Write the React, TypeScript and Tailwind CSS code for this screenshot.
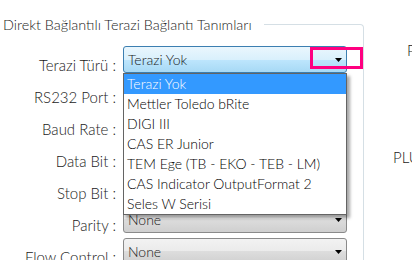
import React from "react";

const Arrow = () => (
  <svg width="7" height="4" viewBox="0 0 7 4" className="block">
    <polygon points="0,0 7,0 3.5,4" fill="#000" />
  </svg>
);

const Combo = ({ text, hot }: { text: string; hot?: boolean }) => (
  <div
    className={
      hot
        ? "relative ml-[7px] h-[27px] w-[224px] shrink-0 rounded-[3px] border border-[#3c7fb1] bg-[linear-gradient(#eaf6fd_0%,#d9f0fc_50%,#bee6fd_50%,#a7d9f5_100%)] flex items-center justify-between pl-[4px] pr-[4px]"
        : "relative ml-[7px] h-[27px] w-[224px] shrink-0 rounded-[3px] border border-[#8a8a8a] bg-[linear-gradient(#f2f2f2_0%,#ebebeb_50%,#dddddd_50%,#cfcfcf_100%)] flex items-center justify-between pl-[4px] pr-[4px]"
    }
  >
    <span className="leading-[20px] whitespace-nowrap">{text}</span>
    <Arrow />
  </div>
);

const rows = [
  "Terazi Türü :",
  "RS232 Port :",
  "Baud Rate :",
  "Data Bit :",
  "Stop Bit :",
  "Parity :",
  "Flow Control :",
];

const items = [
  "Terazi Yok",
  "Mettler Toledo bRite",
  "DIGI III",
  "CAS ER Junior",
  "TEM Ege (TB - EKO - TEB - LM)",
  "CAS Indicator OutputFormat 2",
  "Seles W Serisi",
];

export default function App() {
  return (
    <div className="relative flex h-[260px] w-[412px] overflow-hidden bg-white font-['Lato',sans-serif] text-[14px] font-light text-[#1a1a1a]">
      <div className="w-[364px] shrink-0 pt-[24px]">
        <div className="relative h-[300px] rounded-tr-[4px] border-t border-r border-[#d5dfe5]">
          <div className="absolute left-0 top-[-10px] bg-white pl-[3px] pr-[12px] text-[14.4px] leading-[20px] whitespace-nowrap">
            Direkt Bağlantılı Terazi Bağlantı Tanımları
          </div>
          <div className="flex flex-col gap-[5px] pt-[21px]">
            {rows.map((r, i) => (
              <div key={r} className="flex h-[27px] items-start">
                <div className="w-[116px] shrink-0 pt-[9px] text-right text-[15px] leading-[20px] whitespace-nowrap">
                  {r}
                </div>
                <Combo text={i === 0 ? "Terazi Yok" : i >= 5 ? "None" : ""} hot={i === 0} />
              </div>
            ))}
          </div>
        </div>
      </div>
      <div className="flex-1 whitespace-nowrap text-[15px]">
        <div className="pl-[43px] pt-[40px] leading-[20px]">P</div>
        <div className="mt-[87px] pl-[29px] leading-[20px]">PLU</div>
      </div>

      <div className="absolute left-[123px] top-[73px] w-[224px] border border-[#646464] bg-white shadow-[3px_3px_3px_rgba(0,0,0,0.35)]">
        {items.map((it, i) => (
          <div
            key={it}
            className={
              i === 0
                ? "h-[20px] bg-[#3399ff] pl-[3px] leading-[20px] text-white whitespace-nowrap"
                : "h-[20px] pl-[3px] leading-[20px] text-black whitespace-nowrap"
            }
          >
            {it}
          </div>
        ))}
      </div>

      <div className="absolute left-[310px] top-[47px] h-[22px] w-[53px] border-[3px] border-[#ff0080]" />
    </div>
  );
}
